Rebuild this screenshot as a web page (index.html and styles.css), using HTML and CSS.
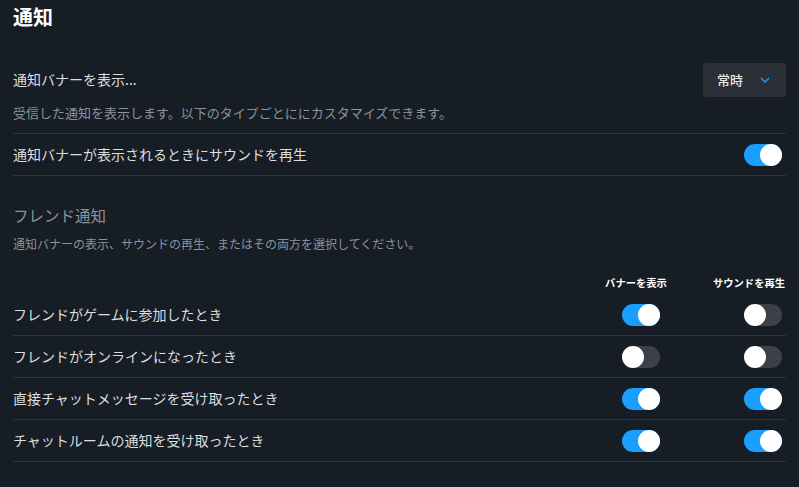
FILE: index.html
```html
<!DOCTYPE html>
<html lang="ja">
<head>
<meta charset="utf-8">
<link rel="stylesheet" href="styles.css">
</head>
<body>
<div class="page">
  <h1 class="title">通知</h1>

  <div class="banner-row">
    <div class="label">通知バナーを表示...</div>
    <div class="dropdown">
      <span class="dd-text">常時</span>
      <svg class="chev" width="10" height="6" viewBox="0 0 10 6"><polyline points="1,1 5,5 9,1" fill="none" stroke="#1a9fff" stroke-width="1.3"/></svg>
    </div>
  </div>
  <div class="desc first-desc">受信した通知を表示します。以下のタイプごとににカスタマイズできます。</div>

  <div class="setting-row">
    <div class="label">通知バナーが表示されるときにサウンドを再生</div>
    <div class="toggle on"><span class="knob"></span></div>
  </div>

  <h2 class="section">フレンド通知</h2>
  <div class="desc small">通知バナーの表示、サウンドの再生、またはその両方を選択してください。</div>

  <div class="grid head">
    <div></div>
    <div class="colhead">バナーを表示</div>
    <div></div>
    <div class="colhead">サウンドを再生</div>
  </div>

  <div class="grid row">
    <div class="label">フレンドがゲームに参加したとき</div>
    <div class="cell a"><div class="toggle on"><span class="knob"></span></div></div>
    <div></div>
    <div class="cell b"><div class="toggle"><span class="knob"></span></div></div>
  </div>
  <div class="grid row">
    <div class="label">フレンドがオンラインになったとき</div>
    <div class="cell a"><div class="toggle"><span class="knob"></span></div></div>
    <div></div>
    <div class="cell b"><div class="toggle"><span class="knob"></span></div></div>
  </div>
  <div class="grid row">
    <div class="label">直接チャットメッセージを受け取ったとき</div>
    <div class="cell a"><div class="toggle on"><span class="knob"></span></div></div>
    <div></div>
    <div class="cell b"><div class="toggle on"><span class="knob"></span></div></div>
  </div>
  <div class="grid row">
    <div class="label">チャットルームの通知を受け取ったとき</div>
    <div class="cell a"><div class="toggle on"><span class="knob"></span></div></div>
    <div></div>
    <div class="cell b"><div class="toggle on"><span class="knob"></span></div></div>
  </div>
</div>
</body>
</html>
```

FILE: styles.css
```css
html, body {
  margin: 0;
  padding: 0;
  background: #171d25;
  width: 799px;
  height: 487px;
  overflow: hidden;
}
body {
  font-family: "Noto Sans CJK JP", "Noto Sans", sans-serif;
  color: #dcdedf;
}
.page {
  padding: 0 13px;
  width: 773px;
}
.title {
  margin: 5px 0 0 0;
  font-size: 20px;
  line-height: 24px;
  font-weight: 700;
  color: #ffffff;
}
.banner-row {
  margin-top: 34px;
  height: 34px;
  display: flex;
  align-items: center;
  justify-content: space-between;
}
.label {
  font-size: 14px;
  line-height: 18px;
  padding-bottom: 2px;
  color: #dcdedf;
}
.dropdown {
  width: 83px;
  height: 34px;
  box-sizing: border-box;
  background: #2b2f38;
  border-radius: 3px;
  display: flex;
  align-items: center;
  padding-left: 14px;
}
.dd-text {
  font-size: 13px;
  color: #e6e7e8;
  font-weight: 500;
  width: 43px;
  padding-bottom: 1px;
}
.chev {
  display: block;
}
.desc {
  font-size: 13px;
  line-height: 18px;
  color: #8b929a;
}
.first-desc {
  margin-top: 7px;
  padding-bottom: 11px;
  border-bottom: 1px solid #30343c;
}
.setting-row {
  height: 41px;
  display: flex;
  align-items: center;
  justify-content: space-between;
  border-bottom: 1px solid #30343c;
  padding-right: 4px;
}
.toggle {
  width: 38px;
  height: 22px;
  border-radius: 11px;
  background: #3d4048;
  position: relative;
}
.toggle.on {
  background: #1a9fff;
}
.knob {
  position: absolute;
  top: 0;
  left: 0;
  width: 22px;
  height: 22px;
  border-radius: 50%;
  background: #ffffff;
}
.toggle.on .knob {
  left: 16px;
}
.section {
  margin: 29px 0 0 0;
  font-size: 15.5px;
  line-height: 20px;
  font-weight: 400;
  color: #8b929a;
}
.desc.small {
  margin-top: 11px;
  font-size: 12px;
  line-height: 16px;
}
.grid {
  display: grid;
  grid-template-columns: 1fr 72px 40px 74px;
  align-items: center;
}
.head {
  margin-top: 23px;
  padding-bottom: 4px;
}
.colhead {
  font-size: 10.3px;
  line-height: 15px;
  font-weight: 700;
  color: #ffffff;
  text-align: center;
  white-space: nowrap;
}
.row {
  height: 41px;
  border-bottom: 1px solid #30343c;
}
.cell {
  display: flex;
}
.cell.a {
  padding-left: 22px;
}
.cell.b {
  padding-left: 32px;
}
```
